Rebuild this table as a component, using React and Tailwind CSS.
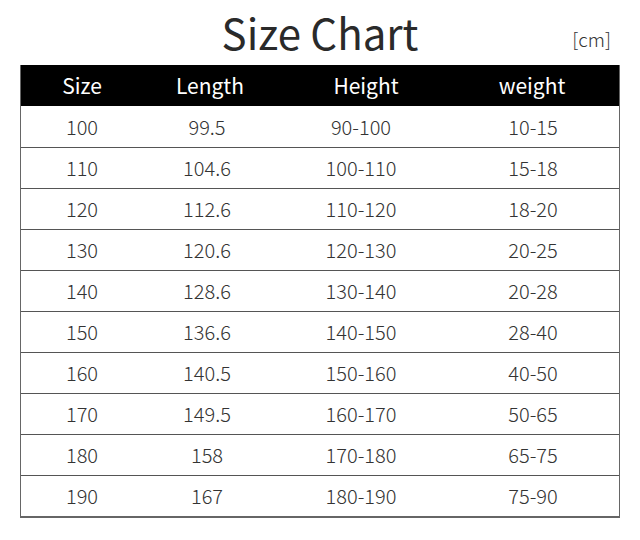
const rows = [
  ['100', '99.5', '90-100', '10-15'],
  ['110', '104.6', '100-110', '15-18'],
  ['120', '112.6', '110-120', '18-20'],
  ['130', '120.6', '120-130', '20-25'],
  ['140', '128.6', '130-140', '20-28'],
  ['150', '136.6', '140-150', '28-40'],
  ['160', '140.5', '150-160', '40-50'],
  ['170', '149.5', '160-170', '50-65'],
  ['180', '158', '170-180', '65-75'],
  ['190', '167', '180-190', '75-90'],
];

const cols = 'grid grid-cols-[122px_134px_168px_1fr]';

export default function App() {
  return (
    <div className="w-[640px] h-[540px] bg-white text-[#222] font-['Noto_Sans_CJK_SC','Noto_Sans',sans-serif]">
      <div className="relative h-[65px]">
        <h1 className="text-center text-[42px] leading-[64px] text-[#2a2a2a] font-normal">Size Chart</h1>
        <span className="absolute right-[29px] top-[25px] text-[19px] font-light text-[#333]">[cm]</span>
      </div>
      <div className="mx-[20px] border-x border-b-2 border-[#666]">
        <div className={`${cols} h-[41px] bg-black text-white text-[21px] items-center text-center`}>
          <span>Size</span>
          <span>Length</span>
          <span className="pl-[10px]">Height</span>
          <span>weight</span>
        </div>
        {rows.map((r, i) => (
          <div
            key={r[0]}
            className={`${cols} h-[41px] items-center text-center text-[20px] leading-[38px] font-light text-[#333] ${i > 0 ? 'border-t border-[#555]' : ''}`}
          >
            <span>{r[0]}</span>
            <span className="pr-[6px]">{r[1]}</span>
            <span>{r[2]}</span>
            <span className="pl-[2px]">{r[3]}</span>
          </div>
        ))}
      </div>
    </div>
  );
}
